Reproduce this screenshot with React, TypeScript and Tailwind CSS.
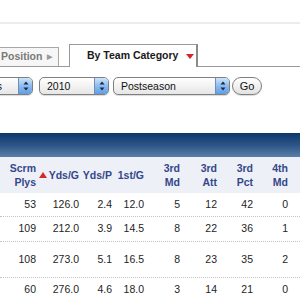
import React from "react";

const cols = [
  { w: 36, head: ["Scrm", "Plys"] },
  { w: 43, head: ["Yds/G"], sorted: true },
  { w: 33, head: ["Yds/P"] },
  { w: 32, head: ["1st/G"] },
  { w: 36, head: ["3rd", "Md"] },
  { w: 37, head: ["3rd", "Att"] },
  { w: 36, head: ["3rd", "Pct"] },
  { w: 35, head: ["4th", "Md"] },
];

const rows = [
  { h: 24, v: ["53", "126.0", "2.4", "12.0", "5", "12", "42", "0"] },
  { h: 25, v: ["109", "212.0", "3.9", "14.5", "8", "22", "36", "1"] },
  { h: 36, v: ["108", "273.0", "5.1", "16.5", "8", "23", "35", "2"] },
  { h: 24, v: ["60", "276.0", "4.6", "18.0", "3", "14", "21", "0"] },
];

function Arrows() {
  return (
    <svg width="6" height="10" viewBox="0 0 6 10">
      <path d="M3 0.5L5.5 3.5H0.5Z" fill="#1a2a40" />
      <path d="M3 9.5L5.5 6.5H0.5Z" fill="#1a2a40" />
    </svg>
  );
}

function Select({ label, width, className = "" }: { label: string; width: number; className?: string }) {
  return (
    <div
      className={`flex h-[18px] shrink-0 overflow-hidden rounded-[5px] border border-[#7f7f7f] bg-gradient-to-b from-white to-[#e6e6e6] shadow-[0_1px_1px_rgba(0,0,0,0.15)] ${className}`}
      style={{ width }}
    >
      <div className="flex flex-1 items-center whitespace-nowrap pl-[7px] text-[10.5px] leading-none text-[#111]">
        {label}
      </div>
      <div className="flex w-[14px] items-center justify-center border-l border-[#6f8fb8] bg-gradient-to-b from-[#cfe3fa] via-[#8cbcf0] to-[#5f9de3]">
        <Arrows />
      </div>
    </div>
  );
}

export default function App() {
  return (
    <div className="h-[300px] w-[300px] overflow-hidden bg-white font-['Liberation_Sans',Arial,sans-serif]">
      <div className="h-[22px]" />
      <div className="h-[2px] bg-[#ececec]" />

      {/* tabs */}
      <div className="flex h-[43px] items-end border-b border-[#9a9a9a]">
        <div className="flex h-[19px] w-[59px] items-center gap-[5px] border-r border-t border-[#a8a8a8] bg-[#f6f6f6] pl-[1px] text-[10.5px] font-bold text-[#7a7a7a]">
          Position
          <span className="text-[7px] text-[#9a9a9a]">▶</span>
        </div>
        <div className="w-[10px]" />
        <div className="-mb-px flex h-[23px] w-[129px] items-center border-l border-r-2 border-t border-[#9a9a9a] border-r-[#8a8a8a] bg-white pl-[17px] text-[10.5px] font-bold text-[#1a1a1a]">
          By Team Category
          <svg className="ml-[8px]" width="8" height="5" viewBox="0 0 8 5">
            <path d="M0 0H8L4 5Z" fill="#d9232b" />
          </svg>
        </div>
      </div>

      {/* selects */}
      <div className="mt-[10px] flex h-[18px] items-center">
        <Select label="Teams" width={70} className="-ml-[37px]" />
        <Select label="2010" width={70} className="ml-[6px]" />
        <Select label="Postseason" width={117} className="ml-[4px]" />
        <div className="ml-[2px] flex h-[18px] w-[30px] items-center justify-center rounded-full border border-[#7f7f7f] bg-gradient-to-b from-white to-[#e2e2e2] text-[11px] text-[#111] shadow-[0_1px_1px_rgba(0,0,0,0.15)]">
          Go
        </div>
      </div>

      <div className="h-[38px]" />

      {/* table */}
      <div className="h-[24px] bg-gradient-to-b from-[#0b376b] via-[#2c5587] to-[#5b7ea8]" />
      <div className="flex h-[36px] items-center bg-[#eef0f7] text-[10.5px] font-bold leading-[14px] text-[#34478a]">
        {cols.map((c, i) => (
          <div key={i} className="flex shrink-0 items-center justify-end text-right" style={{ width: c.w }}>
            {c.sorted && (
              <svg className="mr-[2px]" width="8" height="6" viewBox="0 0 8 6">
                <path d="M4 0L8 6H0Z" fill="#d62a2a" />
              </svg>
            )}
            <div>
              {c.head.map((h, j) => (
                <div key={j}>{h}</div>
              ))}
            </div>
          </div>
        ))}
      </div>
      {rows.map((r, i) => (
        <div
          key={i}
          className={`flex items-center text-[10.5px] text-[#1e1e1e] ${i < rows.length - 1 ? "border-b border-dotted border-[#c4c4c4]" : ""}`}
          style={{ height: r.h }}
        >
          {r.v.map((v, j) => (
            <div key={j} className="shrink-0 text-right" style={{ width: cols[j].w }}>
              {v}
            </div>
          ))}
        </div>
      ))}
    </div>
  );
}
